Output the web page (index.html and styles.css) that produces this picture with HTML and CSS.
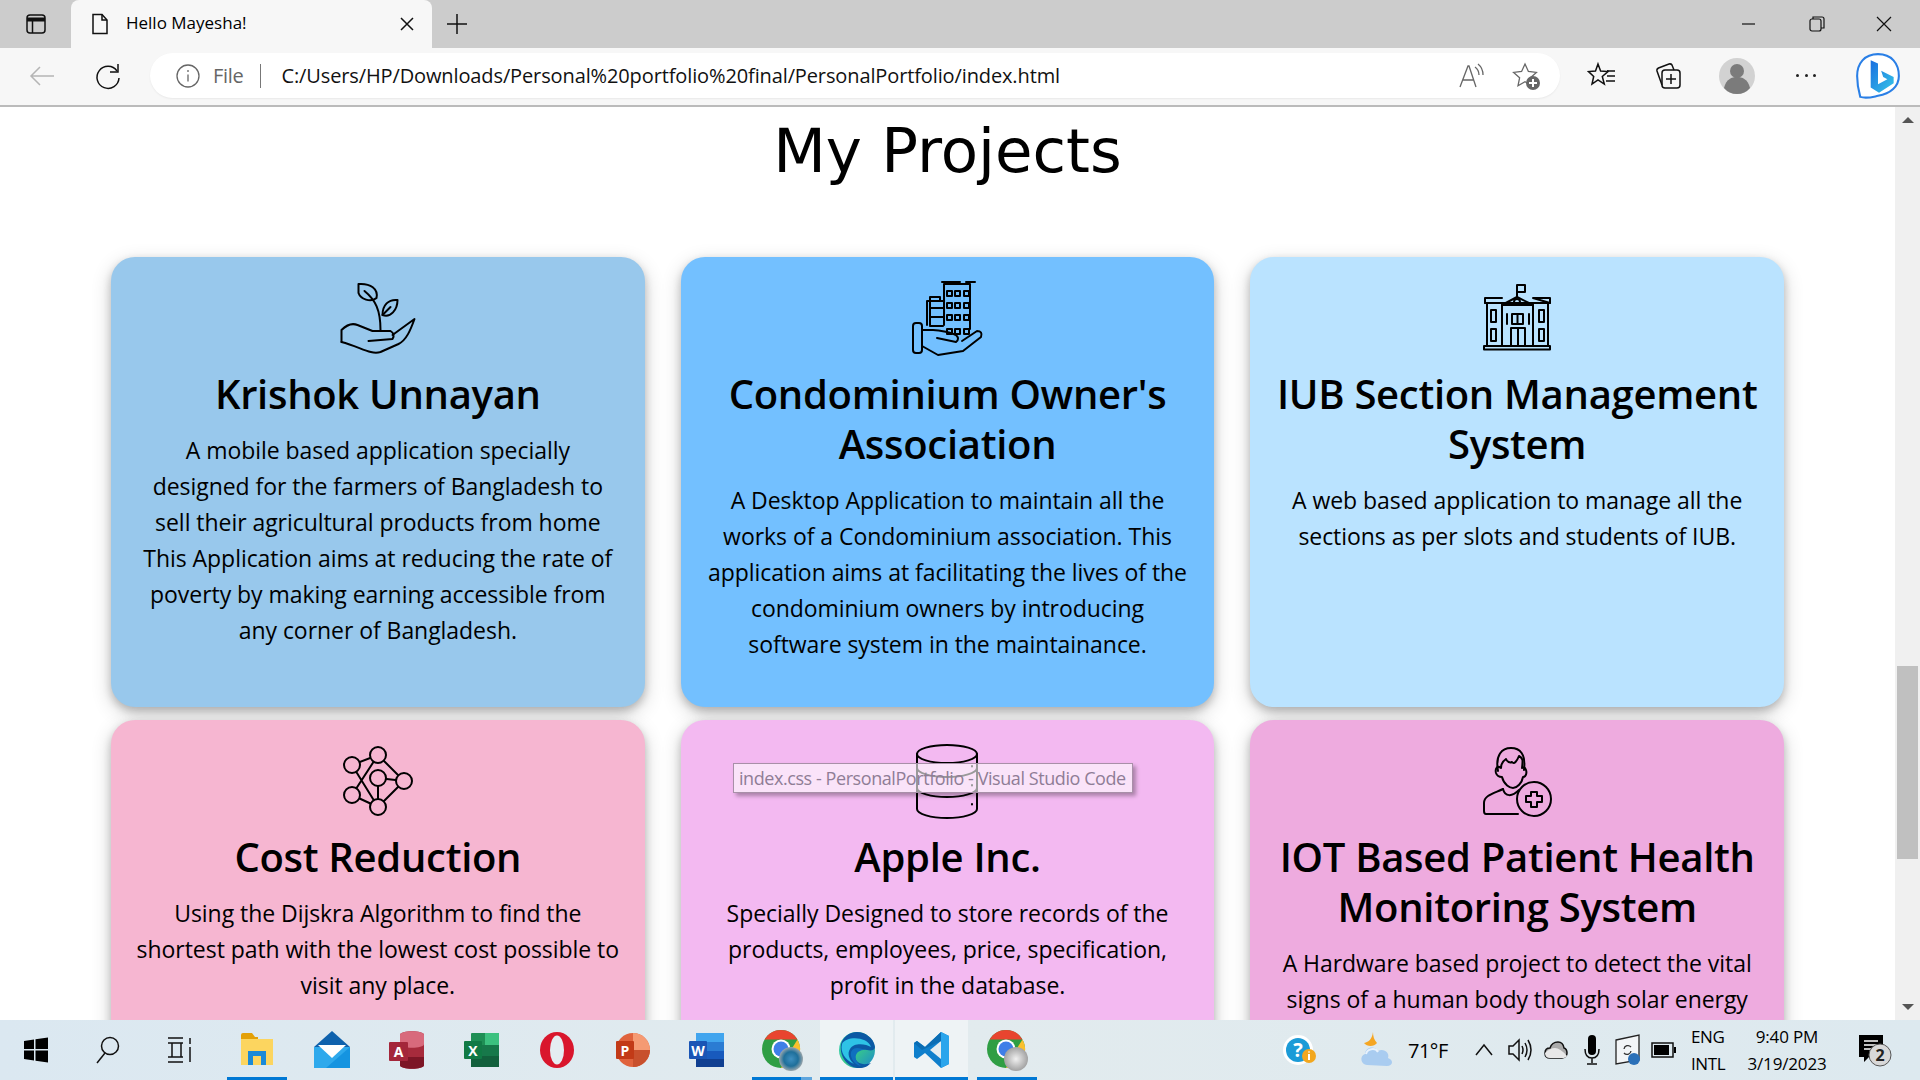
FILE: index.html
```html
<!DOCTYPE html>
<html lang="en">
<head>
  <meta charset="UTF-8">
  <title>Hello Mayesha!</title>
  <link rel="stylesheet" href="styles.css">
</head>
<body>
  <!-- tab strip -->
  <div class="titlebar">
    <div class="tb-btn">
      <svg width="24" height="24" viewBox="0 0 24 24" class="ic"><rect x="3" y="3" width="18" height="18" rx="3"/><path d="M3 7.500h18" stroke-width="4"/><path d="M8.500 7v14"/></svg>
    </div>
    <div class="tab">
      <svg width="24" height="24" viewBox="0 0 24 24" class="ic"><path d="M5 2.500h9l5 5.500v13.500H5z"/><path d="M14 2.500v5.500h5"/></svg>
      <span class="tab-title">Hello Mayesha!</span>
      <svg width="16" height="16" viewBox="0 0 16 16" class="ic tab-close"><path d="M2 2l12 12M14 2L2 14"/></svg>
    </div>
    <div class="tb-btn new-tab">
      <svg width="24" height="24" viewBox="0 0 24 24" class="ic"><path d="M12 2v20M2 12h20"/></svg>
    </div>
    <div class="win-controls">
      <svg width="68" height="24" viewBox="0 0 24 24" class="ic thin"><path d="M6 12h13"/></svg>
      <svg width="68" height="24" viewBox="0 0 24 24" class="ic thin"><rect x="6" y="7" width="11" height="12" rx="2"/><path d="M9 7V5h9q2 0 2 2v9h-3"/></svg>
      <svg width="68" height="24" viewBox="0 0 24 24" class="ic thin"><path d="M5 5l14 14M19 5L5 19"/></svg>
    </div>
  </div>

  <!-- address bar -->
  <div class="toolbar">
    <svg width="30" height="30" viewBox="0 0 30 30" class="ic faded back"><path d="M27 15H4M13 6l-9 9 9 9"/></svg>
    <svg width="30" height="30" viewBox="0 0 30 30" class="ic reload"><path d="M24 10a11 11 0 1 0 2 7"/><path d="M25 3v8h-8"/></svg>
    <div class="omnibox">
      <svg width="26" height="26" viewBox="0 0 26 26" class="ic grey"><circle cx="13" cy="13" r="11"/><path d="M13 11.500v7M13 7v2"/></svg>
      <span class="scheme">File</span>
      <span class="sep"></span>
      <span class="url">C:/Users/HP/Downloads/Personal%20portfolio%20final/PersonalPortfolio/index.html</span>
      <svg width="28" height="28" viewBox="0 0 28 28" class="ic grey read"><path d="M3 25L11 4h1l7 21M6 18h11M18 5q4 3 4 8M21 2q5 4 5 11"/></svg>
      <svg width="30" height="30" viewBox="0 0 30 30" class="ic grey star"><path d="M14 3l3.400 7.500 8 .9-6 5.400 1.600 8-7-4-7 4 1.600-8-6-5.400 8-.9z"/><circle cx="22" cy="22" r="7" fill="#666" stroke="none"/><path d="M22 18v8M18 22h8" stroke="#fff" stroke-width="2"/></svg>
    </div>
    <svg width="30" height="30" viewBox="0 0 30 30" class="ic fav"><path d="M11 3l2.600 7 7.400.6-5.700 4.800 2 7.600-6.300-4.200L5 23l1.700-7.600L1.500 10.600l7-.6zM20 10h8M20 15h8M19 20h9"/></svg>
    <svg width="30" height="30" viewBox="0 0 30 30" class="ic coll"><rect x="9" y="9" width="18" height="18" rx="3"/><path d="M18 13v10M13 18h10M9 24L4 10q-.5-2 1.500-3L16 3q2-.5 3 1l2 5"/></svg>
    <svg width="36" height="36" viewBox="0 0 36 36" class="avatar"><circle cx="18" cy="18" r="18" fill="#d2d2d2"/><circle cx="18" cy="13" r="7" fill="#7b7b7b"/><path d="M5 30c2-9 8-11 13-11s11 2 13 11q-5 6-13 6t-13-6z" fill="#7b7b7b"/></svg>
    <span class="dots"><i></i><i></i><i></i></span>
    <svg width="48" height="48" viewBox="0 0 46 46" class="bing">
      <defs><linearGradient id="bingG" x1="0" y1="0" x2="1" y2="1"><stop offset="0" stop-color="#1a6fe0"/><stop offset="1" stop-color="#35c6e8"/></linearGradient></defs>
      <path d="M23 2C10 2 3 11 3 23c0 8 1 13 3 20 6 2 12 0 17-1 12-2 20-9 20-19C43 11 36 2 23 2z" fill="#fff" stroke="#2a7fe6" stroke-width="2"/>
      <path d="M16 8l7 3v20l9-5-4-2-2-6 12 6v6L24 39l-8-5z" fill="url(#bingG)"/>
    </svg>
  </div>

  <div class="viewport">
    <main class="page">
      <h1>My Projects</h1>
      <div class="cards">
        <section class="card c-farm">
          <svg class="card-icon" viewBox="7.5 0 120 100">
            <path d="M48 19C60 18 68 24 66 33C60 38 50 34 48 28Z"/>
            <path d="M54 26C65 35 70 45 70 65"/>
            <path d="M87 35C78 34 72 40 72 50C80 53 87 45 87 35Z"/>
            <path d="M72 50L80 42"/>
            <path d="M31 77V65C36 60 42 58 47 60L62 66H80Q85 69 82 74L58 76"/>
            <path d="M82 70L104 54C100 65 96 75 88 79L70 87C60 90 50 82 31 77"/>
          </svg>
          <h2>Krishok Unnayan</h2>
          <p>A mobile based application specially designed for the farmers of Bangladesh to sell their agricultural products from home This Application aims at reducing the rate of poverty by making earning accessible from any corner of Bangladesh.</p>
        </section>
        <section class="card c-condo">
          <svg class="card-icon" viewBox="-3 0 120 100">
            <path d="M52 17H70M76 17H85"/>
            <path d="M54 60V19H80V64"/>
            <path d="M40 60V32H50V36M37 60V36H53"/>
            <path d="M40 43H53M40 52H53M40 61H53"/>
            <g class="win"><rect x="57" y="26" width="5" height="5"/><rect x="65" y="26" width="5" height="5"/><rect x="74" y="26" width="5" height="5"/><rect x="57" y="38" width="5" height="5"/><rect x="65" y="38" width="5" height="5"/><rect x="74" y="38" width="5" height="5"/><rect x="57" y="50" width="5" height="5"/><rect x="65" y="50" width="5" height="5"/><rect x="74" y="50" width="5" height="5"/><rect x="57" y="64" width="5" height="5"/><rect x="65" y="64" width="5" height="5"/><rect x="74" y="64" width="5" height="5"/></g>
            <rect x="23" y="58" width="9" height="30" rx="3"/>
            <path d="M32 65H43C50 65 62 68 66 70Q70 74 66 77L47 73"/>
            <path d="M32 81L48 90L73 86L91 72Q93 66 87 66L72 76"/>
          </svg>
          <h2>Condominium Owner's Association</h2>
          <p>A Desktop Application to maintain all the works of a Condominium association. This application aims at facilitating the lives of the condominium owners by introducing software system in the maintainance.</p>
        </section>
        <section class="card c-school">
          <svg class="card-icon" viewBox="-3 -10 120 100">
            <path d="M57 22V10H65V17H57"/>
            <path d="M25 28V23H42M73 23H90V28ZM42 30L57 22L73 30Z"/>
            <path d="M25 28H90"/>
            <circle cx="57" cy="27" r="3"/>
            <path d="M27 71V29M42 71V30M73 71V30M88 71V29"/>
            <rect x="31" y="35" width="5" height="12"/><rect x="31" y="54" width="5" height="12"/>
            <rect x="79" y="35" width="5" height="12"/><rect x="79" y="54" width="5" height="12"/>
            <path d="M47 39V49M69 39V49"/>
            <rect x="52" y="39" width="11" height="10"/><path d="M57.500 39V49"/>
            <path d="M51 71V53H65V71M58 53V71"/>
            <rect x="24" y="71" width="66" height="3.500"/>
          </svg>
          <h2>IUB Section Management System</h2>
          <p>A web based application to manage all the sections as per slots and students of IUB.</p>
        </section>
        <section class="card c-cost">
          <svg class="card-icon" viewBox="2 -7 110 100">
            <path d="M31 30L57 20L83 46L57 72L31 60L57 20M31 30L57 72M57 43V72M57 43L83 46"/>
            <circle cx="31" cy="30" r="8"/><circle cx="57" cy="20" r="8"/><circle cx="57" cy="43" r="8"/>
            <circle cx="83" cy="46" r="8"/><circle cx="31" cy="60" r="8"/><circle cx="57" cy="72" r="8"/>
          </svg>
          <h2>Cost Reduction</h2>
          <p>Using the Dijskra Algorithm to find the shortest path with the lowest cost possible to visit any place.</p>
        </section>
        <section class="card c-apple">
          <svg class="card-icon" viewBox="0 0 120 100">
            <ellipse cx="60" cy="26" rx="30" ry="9"/>
            <path d="M30 26V81C30 86 44 90 60 90S90 86 90 81V26"/>
            <path d="M30 40C30 45 44 49 60 49S90 45 90 40M30 60C30 65 44 69 60 69S90 65 90 60"/>
            <path d="M85 38v.5M85 57v.5M85 76v.5"/>
          </svg>
          <h2>Apple Inc.</h2>
          <p>Specially Designed to store records of the products, employees, price, specification, profit in the database.</p>
        </section>
        <section class="card c-iot">
          <svg class="card-icon" viewBox="-3 -7 120 100">
            <path d="M41 33C37 30 35 34 36 38C37 41 40 42 42 42C44 50 50 53 53 53C57 53 62 48 63 42C66 42 67 38 66 35C65 32 63 32 62 33C63 25 63 23 59 21C57 26 54 30 52 27C50 28 47 27 46 24C43 26 41 29 41 33Z"/>
            <path d="M38 36C35 20 42 13 51 13C60 13 66 19 64 35"/>
            <path d="M43 54C45 62 52 62 59 55"/>
            <path d="M58 79H26Q24 79 24 76V68C24 60 35 58 43 54"/>
            <circle cx="74" cy="64" r="17"/>
            <path d="M71 57H77V61H82V67H77V72H71V67H66V61H71Z"/>
          </svg>
          <h2>IOT Based Patient Health Monitoring System</h2>
          <p>A Hardware based project to detect the vital signs of a human body though solar energy</p>
        </section>
      </div>
      <div class="tooltip">index.css - PersonalPortfolio - Visual Studio Code</div>
    </main>
    <div class="scrollbar">
      <span class="arrow up"></span>
      <span class="thumb"></span>
      <span class="arrow down"></span>
    </div>
  </div>

  <!-- windows taskbar -->
  <footer class="taskbar">
    <div class="sys-btn">
      <svg width="26" height="26" viewBox="0 0 26 26"><path d="M1 4l10-1.500V12H1zM12.500 2.300L25 .5V12H12.500zM1 13.500h10v10L1 22zM12.500 13.500H25V25.500l-12.500-1.800z"/></svg>
    </div>
    <div class="sys-btn">
      <svg width="26" height="28" viewBox="0 0 26 28" class="ic"><circle cx="15" cy="10" r="8.500"/><path d="M10 17L2 27"/></svg>
    </div>
    <div class="sys-btn">
      <svg width="26" height="28" viewBox="0 0 26 28" class="ic"><path d="M1 2h15M1 7h15M5 7v14M14 7v14M1 21h15M1 26h15M23 2v6M23 11v15"/></svg>
    </div>

    <div class="task-btn first running">
      <svg width="40" height="40" viewBox="0 0 40 40"><path d="M4 9V5q0-2 2-2h9l3 4h3v4z" fill="#e3a008"/><rect x="4" y="9" width="32" height="26" fill="#fcd55f"/><path d="M11 35V21h18v14h-5v-9h-8v9z" fill="#1a8ad8"/></svg>
    </div>
    <div class="task-btn">
      <svg width="40" height="40" viewBox="0 0 40 40"><path d="M20 1L38 17H2z" fill="#0f62ad"/><path d="M2 17h36v21H2z" fill="#2ea9ec"/><path d="M6 15h28L20 28z" fill="#fff"/><path d="M38 17v21H14z" fill="#1594e0"/></svg>
    </div>
    <div class="task-btn">
      <svg width="40" height="40" viewBox="0 0 40 40"><path d="M13 5c0-5 24-5 24 0v30c0 5-24 5-24 0z" fill="#a72b3c"/><path d="M13 5c0-5 24-5 24 0v9c0 5-24 5-24 0z" fill="#d86a7c"/><path d="M13 27h24v8c0 5-24 5-24 0z" fill="#7d1626"/><rect x="2" y="12" width="19" height="19" rx="1" fill="#a4263a"/><text x="11.500" y="27" class="app-letter">A</text></svg>
    </div>
    <div class="task-btn">
      <svg width="40" height="40" viewBox="0 0 40 40"><rect x="9" y="3" width="28" height="34" rx="1" fill="#1f8f55"/><rect x="23" y="3" width="14" height="12" fill="#3cc17f"/><rect x="9" y="15" width="28" height="11" fill="#17784a"/><rect x="9" y="26" width="28" height="11" fill="#12603c"/><rect x="2" y="11" width="18" height="18" rx="1" fill="#117a45"/><text x="11" y="26" class="app-letter">X</text></svg>
    </div>
    <div class="task-btn">
      <svg width="40" height="40" viewBox="0 0 40 40"><ellipse cx="20" cy="20" rx="17" ry="18" fill="#d9162c"/><ellipse cx="20" cy="20" rx="7" ry="14.500" fill="#e4edf1"/></svg>
    </div>
    <div class="task-btn">
      <svg width="40" height="40" viewBox="0 0 40 40"><circle cx="21" cy="20" r="17" fill="#e0633d"/><path d="M21 3a17 17 0 0 1 17 17H21z" fill="#f59a73"/><path d="M21 20h17a17 17 0 0 1-17 17z" fill="#c8502d"/><rect x="4" y="11" width="18" height="18" rx="1" fill="#c23a17"/><text x="13" y="26" class="app-letter">P</text></svg>
    </div>
    <div class="task-btn">
      <svg width="40" height="40" viewBox="0 0 40 40"><rect x="9" y="3" width="28" height="34" rx="1" fill="#2b7cd3"/><rect x="9" y="3" width="28" height="9" fill="#41a5ee"/><rect x="9" y="21" width="28" height="8" fill="#185abd"/><rect x="9" y="29" width="28" height="8" fill="#103f91"/><rect x="2" y="11" width="18" height="18" rx="1" fill="#1a55b5"/><text x="11" y="26" class="app-letter">W</text></svg>
    </div>
    <div class="task-btn stacked">
      <svg width="44" height="44" viewBox="0 0 44 44"><use href="#chromeLogo"/><circle cx="31" cy="31" r="12" fill="url(#thumbA)"/></svg>
    </div>
    <div class="task-btn tile">
      <svg width="40" height="40" viewBox="0 0 40 40">
        <defs><linearGradient id="edgeG" x1="0" y1="0" x2="1" y2="1"><stop offset="0" stop-color="#3ad0c0"/><stop offset=".5" stop-color="#37c98a"/><stop offset="1" stop-color="#1a85d0"/></linearGradient></defs>
        <circle cx="20" cy="20" r="18" fill="url(#edgeG)"/>
        <path d="M4 14C2 28 12 38 22 38c6 0 9-2 12-5-8 3-16 0-16-7 0-5 5-7 12-6 5 1 8 0 8-3C37 8 28 2 20 2 12 2 6 7 4 14z" fill="#0c59a4"/>
        <path d="M5 14C9 6 30 6 34 17c-5-3-17-5-21 2-3 4-1 11 4 15C8 30 3 22 5 14z" fill="#2ec3e6"/>
        <path d="M20 18c-4 0-7 3-6 8s5 9 10 10c-5-4-6-8-5-11 1-3 4-5 9-5-2-1-5-2-8-2z" fill="#0f70bf"/>
      </svg>
    </div>
    <div class="task-btn tile">
      <svg width="40" height="40" viewBox="0 0 40 40"><path d="M29 2l8 4v28l-8 4L13 23l-8 6-3-2v-14l3-2 8 6z" fill="#0f7fcc"/><path d="M29 2l8 4v28l-8 4z" fill="#2aa5ec"/><path d="M29 11L18 20l11 9z" fill="#e4edf1"/><path d="M29 2L13 17l-8-6-3 2 8 7L29 11z" fill="#0a6db4"/></svg>
    </div>
    <div class="task-btn running">
      <svg width="44" height="44" viewBox="0 0 44 44"><use href="#chromeLogo"/><circle cx="31" cy="31" r="12" fill="url(#thumbB)"/></svg>
    </div>

    <div class="tray">
      <div class="tray-help">
        <svg width="34" height="34" viewBox="0 0 34 34"><circle cx="15" cy="17" r="15" fill="#fff"/><circle cx="15" cy="17" r="12" fill="#1b9bd7"/><text x="15" y="24" class="help-q">?</text><circle cx="26" cy="23" r="7" fill="#f2a71e"/><path d="M26 21v6M26 18.500v1" stroke="#fff" stroke-width="2"/></svg>
      </div>
      <div class="tray-weather">
        <svg width="40" height="46" viewBox="0 0 38 40"><path d="M15 2c-1 7-4 10-9 11 3 4 10 4 13 0-3-3-4-7-4-11z" fill="#f5a623"/><path d="M9 35c-6 0-8-9-2-11 0-7 10-9 13-3 6-3 12 2 10 7 6 2 5 8-1 8z" fill="#a9ccf0"/><path d="M8 24c1-5 9-7 12-2" fill="none" stroke="#e8f2fc" stroke-width="2"/></svg>
      </div>
      <span class="tray-temp">71°F</span>
      <div class="tray-item"><svg width="22" height="22" viewBox="0 0 22 22" class="ic"><path d="M3 16l8-10 8 10"/></svg></div>
      <div class="tray-item"><svg width="26" height="26" viewBox="0 0 26 26" class="ic"><path d="M2 9v8h4l6 6V3L6 9zM15 9q2 4 0 8M18 6q4 7 0 14M21 3q6 10 0 20"/></svg></div>
      <div class="tray-item"><svg width="26" height="22" viewBox="0 0 26 22" class="ic"><path d="M7 19q-5 0-5-5t5-5q2-6 8-6 5 0 6 6 3 1 3 5t-5 5z" fill="#aaa"/><path d="M2 14q5-5 10-5t12 8q-1 2-5 2H7q-5 0-5-5z" fill="#e8e8e8" stroke="none"/></svg></div>
      <div class="tray-item"><svg width="20" height="32" viewBox="0 0 20 32"><rect x="6" y="1" width="8" height="20" rx="4"/><path d="M3 15q0 9 7 9t7-9M10 24v5M5 30h10" fill="none" stroke="#111" stroke-width="1.500"/></svg></div>
      <div class="tray-item"><svg width="28" height="34" viewBox="0 0 28 34"><path d="M2 7L25 2v25L2 31z" fill="#f2f5f7" stroke="#222" stroke-width="1.300"/><path d="M10 16a4 4 0 0 1 7-2M17 18a4 4 0 0 1-7 2" fill="none" stroke="#333" stroke-width="1.300"/><circle cx="20" cy="26" r="6" fill="#2a70b8"/></svg></div>
      <div class="tray-item"><svg width="26" height="16" viewBox="0 0 26 16"><rect x="1" y="1" width="21" height="14" fill="none" stroke="#111" stroke-width="1.500"/><rect x="3" y="3" width="15" height="10"/><rect x="23" y="5" width="2" height="6"/></svg></div>
      <div class="tray-lang"><span>ENG</span><span>INTL</span></div>
      <div class="tray-clock"><span>9:40 PM</span><span>3/19/2023</span></div>
      <div class="tray-note">
        <svg width="40" height="40" viewBox="0 0 40 40"><path d="M4 5h24v22H14l-5 5v-5H4z"/><path d="M9 11h14M9 15h14M9 19h9" stroke="#fff" stroke-width="1.300"/><circle cx="25" cy="25" r="11" fill="#d8d8d8" stroke="#555" stroke-width="1"/><text x="25" y="31" class="note-count">2</text></svg>
      </div>
    </div>
  </footer>

  <!-- shared bits for the taskbar icons -->
  <svg width="0" height="0" class="defs">
    <defs>
      <radialGradient id="thumbA"><stop offset="0" stop-color="#3f8fc0"/><stop offset=".6" stop-color="#1f6f9a"/><stop offset="1" stop-color="#9aa6ac"/></radialGradient>
      <radialGradient id="thumbB"><stop offset="0" stop-color="#f1f1f1"/><stop offset="1" stop-color="#a2a2a2"/></radialGradient>
      <g id="chromeLogo">
        <circle cx="21" cy="21" r="19" fill="#2f9e44"/>
        <path d="M4.500 11.500A19 19 0 0 1 37.500 11.500H21z" fill="#e8452f"/>
        <path d="M37.500 11.500A19 19 0 0 1 21 40l8-15z" fill="#fbc02d"/>
        <circle cx="21" cy="21" r="9.500" fill="#fff"/>
        <circle cx="21" cy="21" r="7.500" fill="#3f7fe8"/>
      </g>
    </defs>
  </svg>
</body>
</html>
```

FILE: styles.css
```css
* { box-sizing: border-box; }
html, body { height: 100%; }
body {
  margin: 0;
  height: 1080px;
  overflow: hidden;
  display: flex;
  flex-direction: column;
  font-family: "Open Sans", sans-serif;
  color: #000;
  background: #fff;
}

/* shared line icon */
.ic { fill: none; stroke: #111; stroke-width: 1.5; flex: none; }
.ic.thin { stroke-width: 1.2; }
.ic.grey { stroke: #666; stroke-width: 1.3; }
.ic.faded { stroke: #b5b5b5; }

/* tab strip */
.titlebar { height: 48px; flex: none; background: #ccc; display: flex; align-items: flex-end; }
.tb-btn { width: 71px; height: 48px; display: flex; align-items: center; justify-content: center; }
.new-tab { width: 50px; }
.tab {
  width: 361px;
  height: 48px;
  background: #f7f7f7;
  border-radius: 8px 8px 0 0;
  display: flex;
  align-items: center;
  padding: 0 17px;
}
.tab-title { margin-left: 14px; font-size: 17px; letter-spacing: 0; line-height: 22px; padding-bottom: 2px; flex: 1; }
.win-controls { margin-left: auto; display: flex; align-items: center; height: 48px; padding-right: 2px; }

/* address bar */
.toolbar {
  height: 59px;
  flex: none;
  background: #f7f7f7;
  border-bottom: 2px solid #bbb;
  display: flex;
  align-items: center;
  padding-bottom: 2px;
}
.back { margin-left: 27px; }
.reload { margin-left: 36px; }
.omnibox {
  width: 1410px;
  height: 45px;
  margin-left: 27px;
  background: #fff;
  border-radius: 23px;
  display: flex;
  align-items: center;
  padding-left: 25px;
  box-shadow: 0 1px 2px rgba(0, 0, 0, .06);
}
.scheme { margin-left: 12px; font-size: 20px; color: #666; letter-spacing: -0.3px; }
.sep { width: 1px; height: 24px; background: #777; margin: 0 20px 0 17px; }
.url { font-size: 20px; letter-spacing: -0.12px; flex: 1; white-space: nowrap; color: #111; }
.read { margin-right: 26px; }
.star { margin-right: 19px; }
.fav { margin-left: 27px; }
.coll { margin-left: 36px; }
.avatar { margin-left: 36px; }
.dots { margin-left: 41px; width: 20px; display: flex; justify-content: space-between; }
.dots i { width: 3px; height: 3px; background: #222; border-radius: 50%; }
.bing { margin-left: 38px; }

/* page */
.viewport { height: 913px; flex: none; display: flex; }
.page { flex: 1; position: relative; overflow: hidden; }
h1 {
  margin: 0 0 63px;
  padding-top: 1px;
  font-family: "DejaVu Sans", sans-serif;
  font-weight: 400;
  font-size: 61px;
  line-height: 86px;
  text-align: center;
}
.cards {
  display: grid;
  grid-template-columns: repeat(3, 1fr);
  column-gap: 36px;
  row-gap: 13px;
  padding: 0 111px;
}
.card {
  border-radius: 24px;
  padding: 8px 25px 45px;
  text-align: center;
  box-shadow: 0 4px 8px rgba(0, 0, 0, .2), 0 6px 20px rgba(0, 0, 0, .19);
}
.card h2 {
  margin: 4px 0 13px;
  font-size: 40px;
  line-height: 50px;
  font-weight: 600;
  letter-spacing: -0.3px;
}
.card p {
  margin: 0;
  font-size: 23px;
  line-height: 36px;
  letter-spacing: -0.05px;
}
.card-icon { display: block; width: 120px; height: 100px; margin: 0 auto; fill: none; stroke: #000; stroke-width: 2; stroke-linejoin: round; stroke-linecap: round; }
.c-farm { background: #98c8ec; }
.c-condo { background: #73c0ff; }
.c-school { background: #bae3ff; }
.c-cost { background: #f6b6d1; }
.c-apple { background: #f3b9f1; }
.c-iot { background: #eeabdf; }
.c-cost .card-icon circle { fill: #f6b6d1; }

.tooltip {
  position: absolute;
  left: 733px;
  top: 656px;
  width: 400px;
  height: 30px;
  line-height: 28px;
  padding-left: 5px;
  font-size: 18px;
  letter-spacing: -0.43px;
  white-space: nowrap;
  color: #8f7d96;
  background: rgba(255, 255, 255, .6);
  border: 1px solid #a88fa8;
  box-shadow: 3px 3px 4px rgba(0, 0, 0, .3);
}

/* scrollbar */
.scrollbar { width: 25px; flex: none; background: #f0f0f0; display: flex; flex-direction: column; align-items: center; }
.thumb { width: 21px; height: 193px; background: #c0c0c0; margin-top: 543px; }
.arrow { width: 0; height: 0; border-left: 6px solid transparent; border-right: 6px solid transparent; }
.arrow.up { border-bottom: 6px solid #555; margin-top: 10px; }
.arrow.down { border-top: 6px solid #555; margin-top: auto; margin-bottom: 10px; }

/* taskbar */
.taskbar {
  height: 60px;
  flex: none;
  display: flex;
  background: linear-gradient(90deg, #dbe8f1, #e2ebee 50%, #dde9ef);
  font-size: 18px;
}
.sys-btn { width: 72px; display: flex; align-items: center; justify-content: center; }
.task-btn { width: 75px; display: flex; align-items: center; justify-content: center; }
.task-btn.first { margin-left: 3px; }
.task-btn.running { background: linear-gradient(#0078d4, #0078d4) center bottom / 60px 3px no-repeat; }
.task-btn.stacked { background: linear-gradient(90deg, #0078d4 49px, #5ea6de 49px) center bottom / 60px 3px no-repeat; }
.task-btn.tile { background: linear-gradient(#0078d4, #0078d4) center bottom / 73px 3px no-repeat, linear-gradient(#eef3f5, #eef3f5) center / 73px 100% no-repeat; }
.app-letter { font-size: 14px; font-weight: 700; fill: #fff; text-anchor: middle; font-family: "Open Sans", sans-serif; }

.tray { margin-left: 236px; display: flex; align-items: center; flex: 1; }
.tray-help { width: 40px; display: flex; justify-content: center; }
.tray-weather { width: 38px; margin-left: 38px; display: flex; justify-content: center; }
.tray-temp { width: 58px; margin-left: 12px; font-size: 20px; letter-spacing: -0.5px; }
.tray-item { width: 36px; display: flex; justify-content: center; align-items: center; }
.tray-lang { width: 38px; margin-left: 9px; display: flex; flex-direction: column; gap: 5px; font-size: 17px; line-height: 22px; letter-spacing: -0.4px; }
.tray-clock { width: 92px; margin-left: 12px; display: flex; flex-direction: column; gap: 5px; font-size: 17px; line-height: 22px; letter-spacing: -0.15px; text-align: center; }
.tray-note { width: 40px; margin-left: 22px; display: flex; justify-content: center; }
.help-q { font-size: 20px; font-weight: 700; fill: #fff; text-anchor: middle; font-family: "Open Sans", sans-serif; }
.note-count { font-size: 16px; font-weight: 700; fill: #222; text-anchor: middle; font-family: "Open Sans", sans-serif; }
.defs { position: absolute; }
```
